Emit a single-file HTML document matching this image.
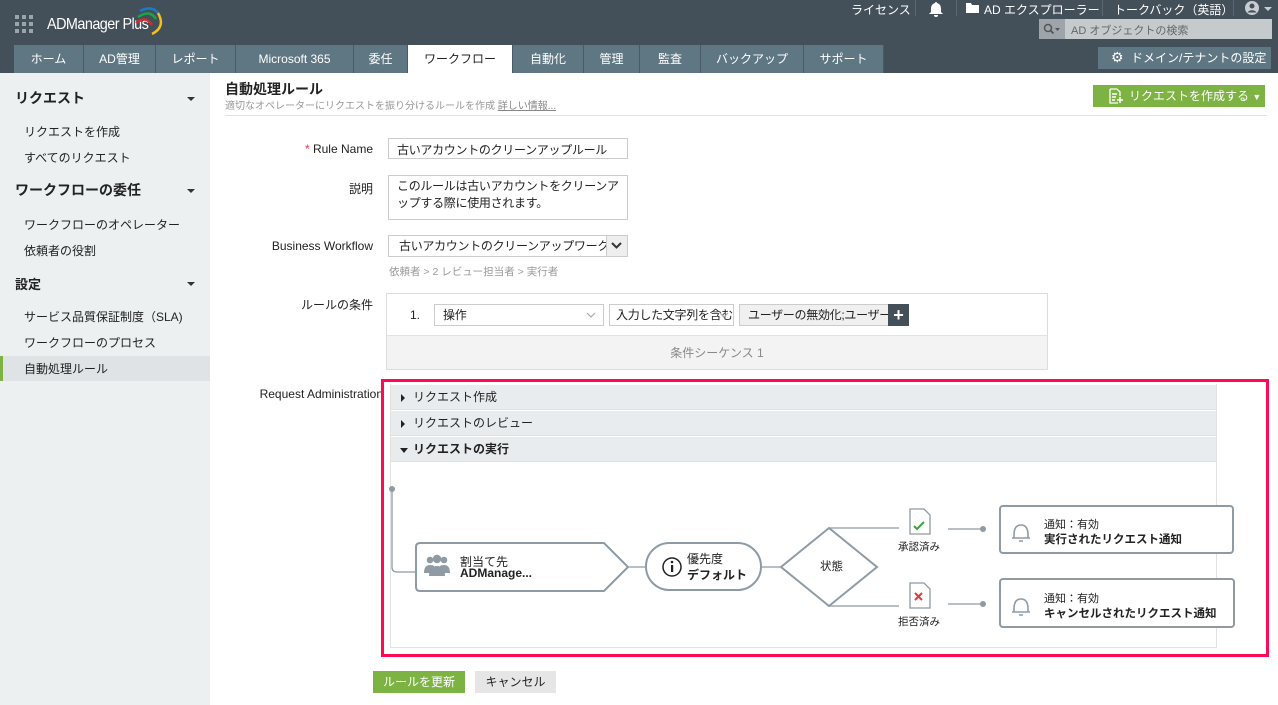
<!DOCTYPE html>
<html><head><meta charset="utf-8"><style>
*{box-sizing:border-box;margin:0;padding:0}
body{width:1278px;height:705px;overflow:hidden;position:relative;background:#fff;font-family:"Liberation Sans","Noto Sans CJK JP",sans-serif;font-size:12px;color:#222}
.a{position:absolute}
.top{left:0;top:0;width:1278px;height:73px;background:#434f59}
.tab{position:absolute;top:45px;height:28px;background:#5f7683;color:#fff;font-size:12px;line-height:28px;text-align:center;border-right:1px solid #4a5a64}
.tab.on{background:#fff;color:#222}
.tt{color:#fff;font-size:12px;top:1px}
.side{left:0;top:73px;width:210px;height:632px;background:#ecf0f1}
.sh{position:absolute;left:15px;font-size:14px;font-weight:bold;color:#222}
.si{position:absolute;left:24px;font-size:12px;color:#222}
.car{position:absolute;left:187px;width:0;height:0;border-left:4px solid transparent;border-right:4px solid transparent;border-top:4px solid #333}
.lbl{position:absolute;font-size:12px;color:#222;text-align:right;width:140px;left:233px}
.inp{position:absolute;border:1px solid #ccc;background:#fff;font-size:12px;padding:2px 8px;color:#222;white-space:nowrap;overflow:hidden;letter-spacing:-0.3px}
.acc{position:absolute;left:391px;width:825px;height:25px;background:#e9ecee;border-bottom:1px solid #dde1e3;font-size:12px;line-height:25px;padding-left:22px}
.acc:before{content:"";position:absolute;left:10px;top:9px;border-top:4px solid transparent;border-bottom:4px solid transparent;border-left:4px solid #222}
.acc.open:before{left:9px;top:11px;border-left:4px solid transparent;border-right:4px solid transparent;border-top:5px solid #222;border-bottom:0}
</style></head><body>
<div class="a top"></div>
<svg class="a" style="left:15px;top:15px" width="18" height="18"><g fill="#9aa4ab"><rect x="0" y="0" width="4" height="4"/><rect x="7" y="0" width="4" height="4"/><rect x="14" y="0" width="4" height="4"/><rect x="0" y="7" width="4" height="4"/><rect x="7" y="7" width="4" height="4"/><rect x="14" y="7" width="4" height="4"/><rect x="0" y="14" width="4" height="4"/><rect x="7" y="14" width="4" height="4"/><rect x="0" y="14" width="4" height="4"/><rect x="14" y="14" width="4" height="4"/></g></svg>
<div class="a" style="left:47px;top:16px;color:#fff;font-size:16px;letter-spacing:-0.6px;transform:scaleX(0.9);transform-origin:left">ADManager Plus</div>
<svg class="a" style="left:100px;top:3px" width="70" height="32"><path d="M40 8 Q52 2 58 10" stroke="#1c7ac0" stroke-width="2.5" fill="none"/><path d="M38 14 Q50 6 56 16" stroke="#1fa14a" stroke-width="2.5" fill="none"/><path d="M36 20 Q46 12 52 22" stroke="#d42b2b" stroke-width="2.5" fill="none"/><path d="M58 10 Q66 24 52 31" stroke="#f5c118" stroke-width="2.5" fill="none"/></svg>
<div class="a tt" style="left:851px">ライセンス</div>
<div class="a" style="left:915px;top:0;width:1px;height:16px;background:#5a6770"></div>
<svg class="a" style="left:928px;top:1px" width="16" height="16"><path d="M8 1a1 1 0 0 1 1 1c3 1 4 3 4 6v3l2 2H1l2-2V8c0-3 1-5 4-6a1 1 0 0 1 1-1zM6 14h4a2 2 0 0 1-4 0z" fill="#fff"/></svg>
<div class="a" style="left:956px;top:0;width:1px;height:16px;background:#5a6770"></div>
<svg class="a" style="left:966px;top:3px" width="13" height="10"><path d="M0 0h5l1 2h7v8H0z" fill="#fff"/></svg>
<div class="a tt" style="left:984px">AD エクスプローラー</div>
<div class="a" style="left:1102px;top:0;width:1px;height:16px;background:#5a6770"></div>
<div class="a tt" style="left:1114px">トークバック（英語）</div>
<div class="a" style="left:1233px;top:0;width:1px;height:16px;background:#5a6770"></div>
<svg class="a" style="left:1244px;top:0px" width="32" height="16"><circle cx="8" cy="8" r="7" fill="#c8cdd1"/><circle cx="8" cy="6" r="2.5" fill="#434f59"/><path d="M3.5 12.5a5 4 0 0 1 9 0" fill="#434f59"/><path d="M20 7h8l-4 4z" fill="#c8cdd1"/></svg>
<div class="a" style="left:1039px;top:19px;width:233px;height:20px;background:#c5cacd"></div>
<div class="a" style="left:1039px;top:19px;width:26px;height:20px;background:#9da5ab"></div>
<svg class="a" style="left:1043px;top:23px" width="18" height="12"><circle cx="5" cy="5" r="3.5" stroke="#555" stroke-width="1.5" fill="none"/><path d="M7.5 7.5l3 3" stroke="#555" stroke-width="1.8"/><path d="M12 5h5l-2.5 3z" fill="#555"/></svg>
<div class="a" style="left:1071px;top:22px;font-size:11px;color:#666">AD オブジェクトの検索</div>
<div class="tab" style="left:14px;width:70px">ホーム</div>
<div class="tab" style="left:84px;width:72px">AD管理</div>
<div class="tab" style="left:156px;width:80px">レポート</div>
<div class="tab" style="left:236px;width:118px">Microsoft 365</div>
<div class="tab" style="left:354px;width:54px">委任</div>
<div class="tab on" style="left:408px;width:105px">ワークフロー</div>
<div class="tab" style="left:513px;width:71px">自動化</div>
<div class="tab" style="left:584px;width:56px">管理</div>
<div class="tab" style="left:640px;width:61px">監査</div>
<div class="tab" style="left:701px;width:103px">バックアップ</div>
<div class="tab" style="left:804px;width:80px">サポート</div>
<div class="a" style="left:1098px;top:47px;width:173px;height:22px;background:#5f7683;color:#fff;font-size:12px;line-height:22px;padding-left:33px">ドメイン/テナントの設定</div>
<div class="a" style="left:1111px;top:49px;color:#fff;font-size:14px">&#9881;</div>

<div class="a side"></div>
<div class="sh" style="top:88px">リクエスト</div><div class="car" style="top:97px"></div>
<div class="si" style="top:123px">リクエストを作成</div>
<div class="si" style="top:149px">すべてのリクエスト</div>
<div class="sh" style="top:180px">ワークフローの委任</div><div class="car" style="top:189px"></div>
<div class="si" style="top:216px">ワークフローのオペレーター</div>
<div class="si" style="top:242px">依頼者の役割</div>
<div class="sh" style="top:274px;font-size:13px">設定</div><div class="car" style="top:282px"></div>
<div class="si" style="top:308px">サービス品質保証制度（SLA)</div>
<div class="si" style="top:334px">ワークフローのプロセス</div>
<div class="a" style="left:0;top:356px;width:210px;height:25px;background:#dfe3e5;border-left:3px solid #7cb342"></div>
<div class="si" style="top:360px">自動処理ルール</div>

<div class="a" style="left:225px;top:79px;font-size:14px;font-weight:bold">自動処理ルール</div>
<div class="a" style="left:225px;top:97px;font-size:10px;color:#999">適切なオペレーターにリクエストを振り分けるルールを作成 <span style="text-decoration:underline;color:#888">詳しい情報...</span></div>
<div class="a" style="left:225px;top:115px;width:1042px;height:1px;background:#e2e2e2"></div>
<div class="a" style="left:1093px;top:85px;width:172px;height:22px;background:#7cb342;color:#fff;font-size:12px;line-height:22px;padding-left:36px;white-space:nowrap">リクエストを作成する <span style="font-size:9px">▼</span></div>
<svg class="a" style="left:1108px;top:88px" width="16" height="16"><path d="M2 1h7l3 3v4M2 1v14h8" stroke="#fff" fill="none" stroke-width="1.3"/><path d="M4 6h5M4 9h4M4 12h3M12 9v6M9 12h6" stroke="#fff" stroke-width="1.5"/></svg>

<div class="lbl" style="top:142px"><span style="color:#e4373c">* </span>Rule Name</div>
<div class="inp" style="left:388px;top:138px;width:240px;height:21px">古いアカウントのクリーンアップルール</div>
<div class="lbl" style="top:180px">説明</div>
<div class="inp" style="left:388px;top:175px;width:240px;height:45px;line-height:17px;white-space:normal">このルールは古いアカウントをクリーンアップする際に使用されます。</div>
<div class="lbl" style="top:239px">Business Workflow</div>
<div class="inp" style="left:388px;top:235px;width:240px;height:22px;padding-left:10px;line-height:16px">古いアカウントのクリーンアップワークフロー</div>
<div class="a" style="left:606px;top:236px;width:21px;height:20px;background:#eee;border-left:1px solid #ccc"></div>
<svg class="a" style="left:610px;top:242px" width="13" height="8"><path d="M2 1l4.5 4.5L11 1" stroke="#333" stroke-width="2" fill="none"/></svg>
<div class="a" style="left:389px;top:264px;font-size:10.5px;color:#999">依頼者 &gt; 2 レビュー担当者 &gt; 実行者</div>

<div class="lbl" style="top:296px">ルールの条件</div>
<div class="a" style="left:386px;top:293px;width:662px;height:77px;border:1px solid #ddd"></div>
<div class="a" style="left:387px;top:335px;width:660px;height:34px;background:#f3f3f3;border-top:1px solid #e3e3e3;text-align:center;line-height:34px;color:#888;font-size:12px">条件シーケンス 1</div>
<div class="a" style="left:410px;top:308px;font-size:12px">1.</div>
<div class="inp" style="left:434px;top:304px;width:170px;height:22px;line-height:16px">操作</div>
<svg class="a" style="left:586px;top:312px" width="10" height="7"><path d="M1 1l4 4 4-4" stroke="#aaa" stroke-width="1.2" fill="none"/></svg>
<div class="inp" style="left:609px;top:304px;width:125px;height:22px;padding-left:6px;padding-right:18px;line-height:16px">入力した文字列を含む</div>
<svg class="a" style="left:719px;top:312px" width="10" height="7"><path d="M1 1l4 4 4-4" stroke="#aaa" stroke-width="1.2" fill="none"/></svg>
<div class="inp" style="left:739px;top:304px;width:150px;height:22px;background:#f0f0f0;line-height:16px">ユーザーの無効化;ユーザー</div>
<div class="a" style="left:888px;top:304px;width:21px;height:22px;background:#434f59;color:#fff;font-size:18px;font-weight:bold;text-align:center;line-height:22px">+</div>

<div class="lbl" style="top:387px;left:243px">Request Administration</div>
<div class="a" style="left:381px;top:379px;width:888px;height:278px;border:3px solid #ff0a54"></div>
<div class="a" style="left:390px;top:384px;width:827px;height:264px;border:1px solid #e2e2e2;border-top:0"></div>
<div class="acc" style="top:385px">リクエスト作成</div>
<div class="acc" style="top:411px">リクエストのレビュー</div>
<div class="acc open" style="top:437px;font-weight:bold">リクエストの実行</div>

<svg class="a" style="left:386px;top:480px" width="880" height="160">
<g stroke="#8e9ba5" stroke-width="1.3" fill="none">
<circle cx="6" cy="9" r="3" fill="#8e9ba5" stroke="none"/>
<path d="M6 9v78q0 5 5 5h19"/>
<path d="M30 67q0-4 4-4h184l24 24-24 24H34q-4 0-4-4z" stroke-width="2" fill="#fff"/>
<path d="M241 87h19"/>
<rect x="260" y="63" width="115" height="47" rx="23.5" stroke-width="2" fill="#fff"/>
<path d="M375 87h20"/>
<path d="M395 87l48-39 48 39-48 39z" stroke-width="2" fill="#fff"/>
<path d="M443 48h70M443 126h70"/>
<path d="M562 49h34M562 124h34"/>
<circle cx="597" cy="49" r="3" fill="#8e9ba5" stroke="none"/>
<circle cx="597" cy="124" r="3" fill="#8e9ba5" stroke="none"/>
<rect x="614" y="26" width="233" height="47" rx="3" stroke-width="2" fill="#fff"/>
<rect x="614" y="99" width="234" height="48" rx="3" stroke-width="2" fill="#fff"/>
</g>
<g fill="#8e9ba5"><circle cx="44" cy="80" r="3.3"/><circle cx="58" cy="80" r="3.3"/><path d="M38 93q0-8 6-8 3 0 4 1v7zM54 93v-7q1-1 4-1 6 0 6 8z"/><circle cx="51" cy="79" r="4.2"/><path d="M43 96q0-10 8-10t8 10z"/></g>
<circle cx="286" cy="87" r="9" stroke="#222" stroke-width="1.5" fill="none"/><rect x="285" y="85" width="2.2" height="7" fill="#222"/><circle cx="286" cy="82" r="1.3" fill="#222"/>
<g stroke="#8e9ba5" stroke-width="1.3" fill="#fff"><path d="M524 29h14l6 6v19h-20z"/><path d="M524 103h14l6 6v19h-20z"/></g>
<path d="M528 46l3 3 7-7" stroke="#3aa33a" stroke-width="2" fill="none"/>
<path d="M529 113l7 7M536 113l-7 7" stroke="#e23b3b" stroke-width="2"/>
<g stroke="#8e9ba5" stroke-width="1.6" fill="none"><path d="M628 55q0-10 7-10t7 10v3h-14zM626 58h18M633 61h4"/><path d="M628 129q0-10 7-10t7 10v3h-14zM626 132h18M633 135h4"/></g>
</svg>
<div class="a" style="left:460px;top:553px;font-size:12px">割当て先</div>
<div class="a" style="left:460px;top:566px;font-size:12px;font-weight:bold">ADManage...</div>
<div class="a" style="left:687px;top:550px;font-size:12px">優先度</div>
<div class="a" style="left:687px;top:566px;font-size:12px;font-weight:bold">デフォルト</div>
<div class="a" style="left:820px;top:558px;font-size:11.5px">状態</div>
<div class="a" style="left:898px;top:539px;font-size:10.5px">承認済み</div>
<div class="a" style="left:898px;top:614px;font-size:10.5px">拒否済み</div>
<div class="a" style="left:1044px;top:516px;font-size:11px">通知：有効</div>
<div class="a" style="left:1044px;top:531px;font-size:11.5px;font-weight:bold">実行されたリクエスト通知</div>
<div class="a" style="left:1044px;top:590px;font-size:11px">通知：有効</div>
<div class="a" style="left:1044px;top:605px;font-size:11.5px;font-weight:bold">キャンセルされたリクエスト通知</div>

<div class="a" style="left:373px;top:671px;width:92px;height:22px;background:#7cb342;color:#fff;text-align:center;line-height:22px;font-size:12px">ルールを更新</div>
<div class="a" style="left:475px;top:671px;width:81px;height:22px;background:#e6e6e6;color:#222;text-align:center;line-height:22px;font-size:12px">キャンセル</div>
</body></html>
